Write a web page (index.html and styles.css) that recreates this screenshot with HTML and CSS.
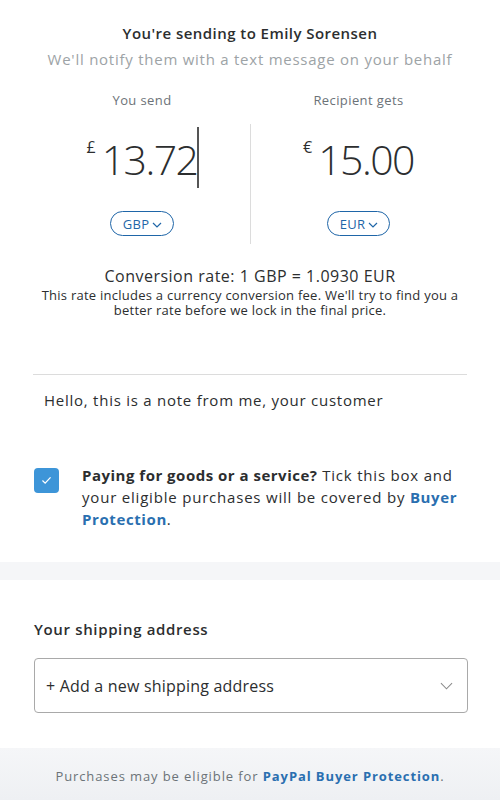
FILE: index.html
```html
<!DOCTYPE html>
<html>
<head>
<meta charset="utf-8">
<link rel="stylesheet" href="styles.css">
</head>
<body>
<div class="page">
  <header class="head">
    <h1 class="title">You're sending to Emily Sorensen</h1>
    <p class="subtitle">We'll notify them with a text message on your behalf</p>
  </header>

  <section class="amounts">
    <div class="col">
      <div class="label">You send</div>
      <div class="amount"><span class="cur">£</span><span class="num">13.72</span><span class="caret"></span></div>
      <button class="pill">GBP<svg class="pchev" viewBox="0 0 10 6" width="10" height="6"><path d="M1 1 L5 5 L9 1" fill="none" stroke="#1f66a8" stroke-width="1.2"/></svg></button>
    </div>
    <div class="col right">
      <div class="label">Recipient gets</div>
      <div class="amount"><span class="cur">€</span><span class="num">15.00</span></div>
      <button class="pill">EUR<svg class="pchev" viewBox="0 0 10 6" width="10" height="6"><path d="M1 1 L5 5 L9 1" fill="none" stroke="#1f66a8" stroke-width="1.2"/></svg></button>
    </div>
  </section>

  <section class="rate">
    <p class="rate-main">Conversion rate: 1 GBP = 1.0930 EUR</p>
    <p class="rate-note">This rate includes a currency conversion fee. We'll try to find you a better rate before we lock in the final price.</p>
  </section>

  <div class="note">Hello, this is a note from me, your customer</div>

  <div class="goods">
    <span class="check"><svg viewBox="0 0 12 10" width="11" height="9"><path d="M1.5 5 L4.5 8 L10.5 1.5" fill="none" stroke="#fff" stroke-width="1.4"/></svg></span>
    <p class="goods-text"><b>Paying for goods or a service?</b> Tick this box and your eligible purchases will be covered by <a class="link">Buyer Protection</a>.</p>
  </div>

  <div class="band"></div>

  <section class="ship">
    <h2 class="ship-title">Your shipping address</h2>
    <div class="select">
      <span>+ Add a new shipping address</span>
      <svg viewBox="0 0 14 8" width="13" height="8"><path d="M1 1 L7 7 L13 1" fill="none" stroke="#8a8a8a" stroke-width="1.1"/></svg>
    </div>
  </section>

  <footer class="foot">Purchases may be eligible for <a class="link">PayPal Buyer Protection</a>.</footer>
</div>
</body>
</html>
```

FILE: styles.css
```css
* { box-sizing: border-box; }
html, body { margin: 0; padding: 0; background: #fff; }
body {
  font-family: "Open Sans", "Noto Sans", sans-serif;
  color: #2c2e2f;
}
.page { width: 500px; height: 800px; display: flex; flex-direction: column; overflow: hidden; }

.head { text-align: center; padding-top: 22px; }
.title { margin: 0; font-size: 15px; font-weight: 600; line-height: 22px; letter-spacing: 0.45px; color: #2c2e2f; }
.subtitle { margin: 4px 0 0; font-size: 15px; line-height: 22px; color: #9da3a6; letter-spacing: 0.75px; }

.amounts { display: grid; grid-template-columns: 1fr 1fr; margin: 20px 34px 0; }
.col { display: flex; flex-direction: column; align-items: center; }
.col.right { border-left: 1px solid #dcdcdc; margin-top: 34px; }
.col.right .label { margin-top: -34px; }
.label { font-size: 13px; line-height: 20px; color: #6c7378; letter-spacing: 0.4px; }
.amount { display: flex; align-items: flex-start; height: 66px; margin-top: 16px; color: #2c2e2f; position: relative; }
.cur { font-size: 16px; line-height: 20px; margin-top: 11px; margin-right: 6px; font-weight: 400; }
.num { font-size: 41px; font-weight: 300; line-height: 66px; letter-spacing: -1.5px; }
.caret { position: absolute; right: -1px; top: 1px; width: 1.5px; height: 61px; background: #555; }
.pill {
  margin-top: 19px; margin-bottom: 8px;
  display: flex; align-items: center; gap: 3px;
  height: 25px; padding: 0 11px 0 12px;
  border: 1px solid #1f66a8; border-radius: 13px; background: #fff;
  font-family: inherit; font-size: 13px; color: #1f66a8; letter-spacing: 0.3px;
}
.pchev { margin-top: 2px; }

.rate { text-align: center; margin-top: 21px; padding: 0 36px; }
.rate-main { margin: 0; font-size: 16px; line-height: 22px; letter-spacing: 0.5px; color: #2c2e2f; }
.rate-note { margin: 1px 0 0; font-size: 13px; line-height: 15px; letter-spacing: 0.25px; color: #2c2e2f; }

.note {
  margin: 56px 33px 0; border-top: 1px solid #dcdcdc;
  padding: 14px 11px 0; font-size: 15px; line-height: 22px; letter-spacing: 0.75px; color: #2c2e2f;
}

.goods { display: flex; align-items: flex-start; gap: 23px; margin: 53px 34px 0; }
.check {
  flex: none; width: 25px; height: 25px; border-radius: 4px; background: #3d95d8;
  display: flex; align-items: center; justify-content: center; margin-top: 4px;
}
.goods-text { margin: 0; font-size: 15px; line-height: 22px; letter-spacing: 0.8px; color: #2c2e2f; }
.goods-text b { font-weight: 700; letter-spacing: 0.5px; }
.link { color: #2a6fb0; font-weight: 700; letter-spacing: 0.6px; }

.band { height: 18px; background: #f5f6f8; margin-top: 32px; }

.ship { padding: 38px 32px 0 34px; }
.ship-title { margin: 0; font-size: 15px; font-weight: 600; line-height: 22px; letter-spacing: 0.65px; color: #2c2e2f; }
.select {
  margin-top: 18px; height: 55px; border: 1px solid #a9a9a9; border-radius: 4px;
  display: flex; align-items: center; justify-content: space-between;
  padding: 0 14px 0 11px; font-size: 16px; letter-spacing: 0.2px; color: #2c2e2f;
}

.foot {
  margin-top: 35px; flex: 1; background: linear-gradient(#f5f6f8, #eef0f3);
  text-align: center; font-size: 13px; line-height: 20px; padding-top: 18px;
  color: #6c7378; letter-spacing: 0.9px;
}
.foot .link { letter-spacing: 0.9px; }
```
